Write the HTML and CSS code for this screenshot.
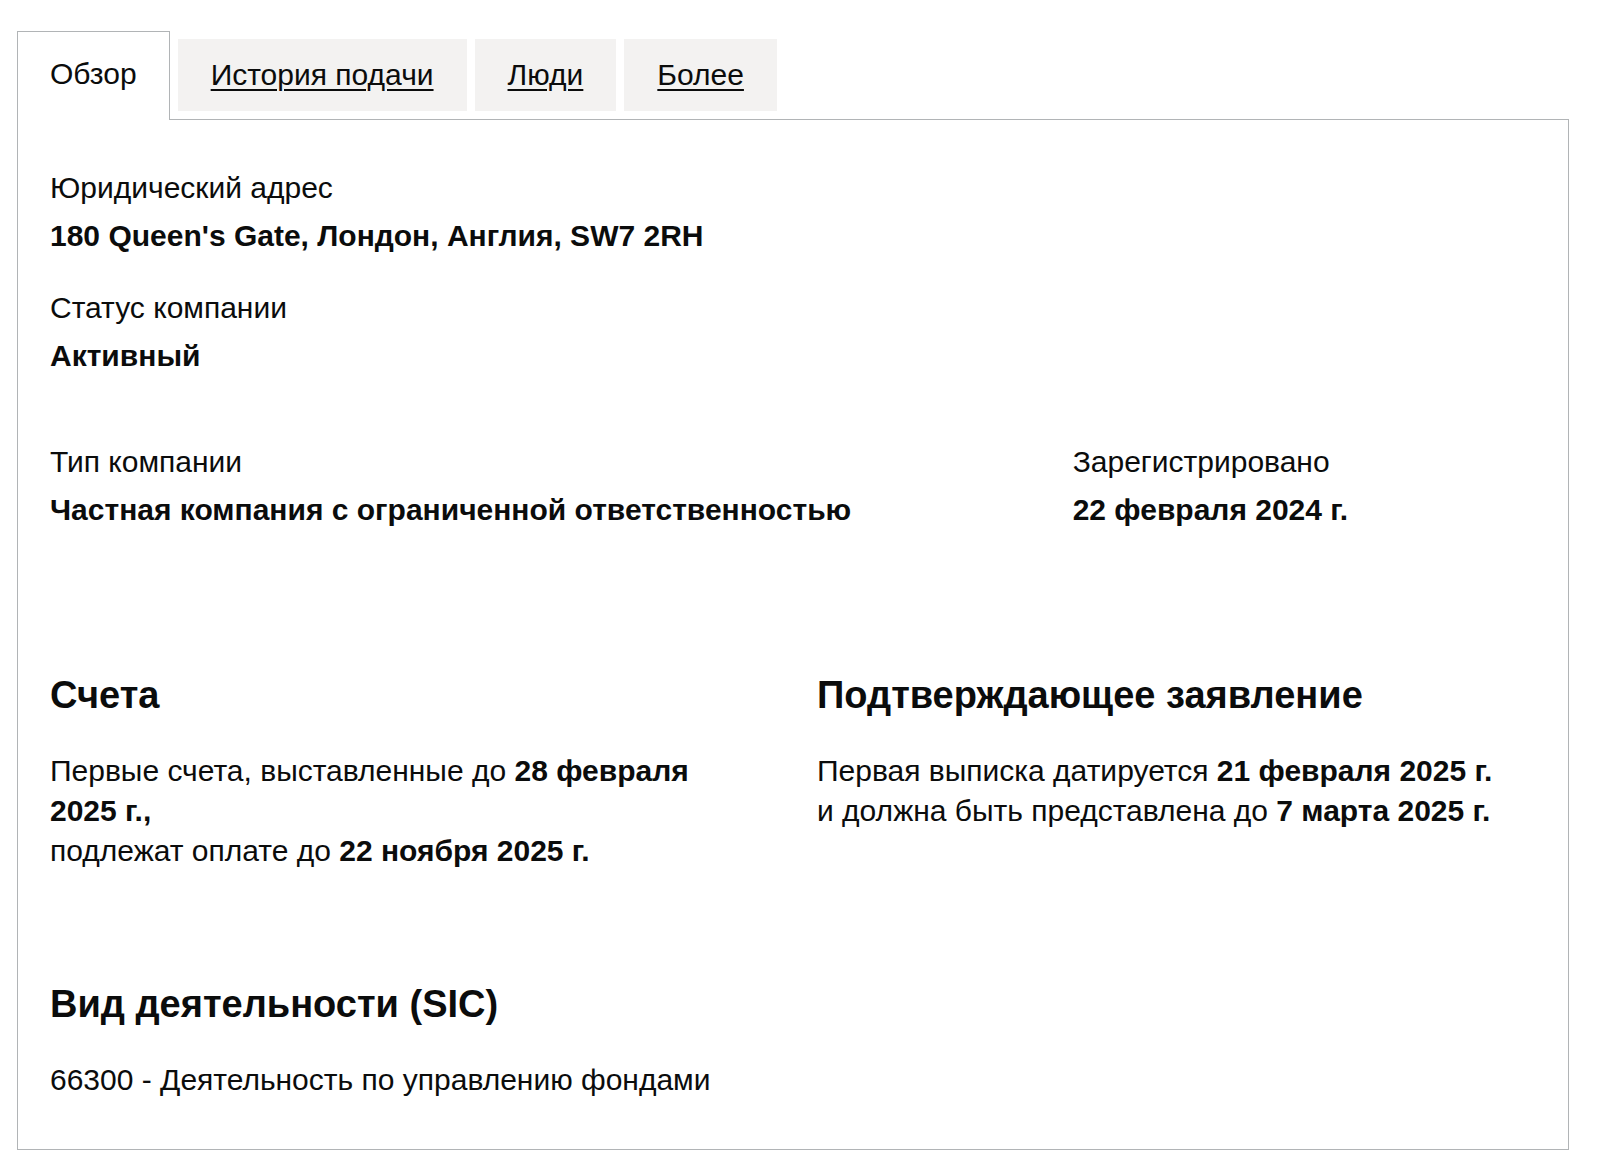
FILE: index.html
```html
<!DOCTYPE html>
<html lang="ru">
<head>
    <meta charset="UTF-8">
    <title>Обзор компании</title>
    <link rel="stylesheet" href="styles.css">
</head>
<body>
    <div class="page">
        <ul class="tabs">
            <li class="tab tab-selected"><span>Обзор</span></li>
            <li class="tab"><a href="#">История подачи</a></li>
            <li class="tab"><a href="#">Люди</a></li>
            <li class="tab"><a href="#">Более</a></li>
        </ul>

        <div class="panel">
            <dl class="field">
                <dt>Юридический адрес</dt>
                <dd>180 Queen's Gate, Лондон, Англия, SW7 2RH</dd>
            </dl>

            <dl class="field field-spaced">
                <dt>Статус компании</dt>
                <dd>Активный</dd>
            </dl>

            <div class="row row-wide">
                <dl class="field col-two-thirds">
                    <dt>Тип компании</dt>
                    <dd>Частная компания с ограниченной ответственностью</dd>
                </dl>
                <dl class="field col-one-third">
                    <dt>Зарегистрировано</dt>
                    <dd>22 февраля 2024 г.</dd>
                </dl>
            </div>

            <div class="row row-sections">
                <div class="col-half">
                    <h2>Счета</h2>
                    <p>Первые счета, выставленные до <strong>28 февраля <span class="nowrap">2025 г.,</span></strong><br>
                    подлежат оплате до <strong>22 ноября 2025 г.</strong></p>
                </div>
                <div class="col-half">
                    <h2>Подтверждающее заявление</h2>
                    <p>Первая выписка датируется <strong>21 февраля 2025 г.</strong><br>
                    и должна быть представлена до <strong>7 марта 2025 г.</strong></p>
                </div>
            </div>

            <h2 class="sic-title">Вид деятельности (SIC)</h2>
            <p>66300 - Деятельность по управлению фондами</p>
        </div>
    </div>
</body>
</html>
```

FILE: styles.css
```css
* {
    margin: 0;
    padding: 0;
    box-sizing: border-box;
}

body {
    background-color: #ffffff;
    color: #0b0c0c;
    font-family: 'Liberation Sans', Arial, sans-serif;
    font-size: 30px;
    line-height: 40px;
}

.page {
    padding: 39px 31px 15px 17px;
}

.tabs {
    list-style: none;
    display: flex;
    align-items: flex-start;
}

.tab {
    background-color: #f3f2f1;
    padding: 16px 33px;
    margin-right: 8px;
}

.tab a {
    color: #0b0c0c;
    text-decoration: underline;
    text-decoration-thickness: 2px;
    text-underline-offset: 4px;
}

.tab-selected {
    background-color: #ffffff;
    border: 1px solid #b1b4b6;
    border-bottom: 0;
    margin-top: -8px;
    margin-bottom: -1px;
    padding: 22px 32px 26px;
    position: relative;
}

.panel {
    border: 1px solid #b1b4b6;
    padding: 48px 32px 49px 32px;
}

.field dt {
    font-weight: 400;
    margin-bottom: 8px;
}

.field dd {
    font-weight: 700;
}

.field-spaced {
    margin-top: 32px;
}

.row {
    display: flex;
    margin: 0 -24px;
}

.row > * {
    padding: 0 24px;
}

.row-wide {
    margin-top: 66px;
}

.col-two-thirds {
    width: 66.6667%;
}

.col-one-third {
    width: 33.3333%;
}

.col-half {
    width: 50%;
}

.row-sections {
    margin-top: 141px;
}

h2 {
    font-size: 38px;
    line-height: 48px;
    font-weight: 700;
    margin-bottom: 32px;
}

.sic-title {
    margin-top: 109px;
}

strong {
    font-weight: 700;
}

.nowrap {
    white-space: nowrap;
}
```
